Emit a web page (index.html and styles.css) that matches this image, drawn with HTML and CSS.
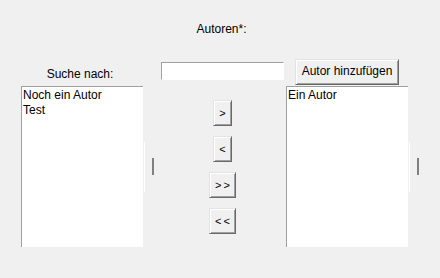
FILE: index.html
```html
<!DOCTYPE html>
<html lang="de">
<head>
<meta charset="utf-8">
<title>Autoren</title>
<link rel="stylesheet" href="styles.css">
</head>
<body>
<div class="frame">
  <div class="title">Autoren*:</div>
  <div class="grid">
    <div class="label">Suche nach:</div>
    <div></div>
    <div class="search-cell"><input class="search" type="text"></div>
    <div class="add-cell"><button class="btn add">Autor hinzufügen</button></div>
    <div></div>

    <div class="list">
      <div class="item">Noch ein Autor</div>
      <div class="item">Test</div>
    </div>
    <div class="sash"><span class="sash-line"></span><span class="sash-grip"></span></div>
    <div class="moves">
      <button class="btn move">&gt;</button>
      <button class="btn move">&lt;</button>
      <button class="btn move wide">&gt;&gt;</button>
      <button class="btn move wide">&lt;&lt;</button>
    </div>
    <div class="list">
      <div class="item">Ein Autor</div>
    </div>
    <div class="sash"><span class="sash-line"></span><span class="sash-grip"></span></div>
  </div>
</div>
</body>
</html>
```
FILE: styles.css
```css
html, body {
  margin: 0;
  padding: 0;
  background: #f0f0f0;
}

body {
  font-family: "Liberation Sans", Arial, sans-serif;
  font-size: 12px;
  line-height: 15px;
  color: #000;
}

.frame {
  width: 440px;
  height: 278px;
  padding-top: 22px;
  box-sizing: border-box;
}

.title {
  text-align: center;
  padding-left: 3px;
  margin-bottom: 22px;
}

.grid {
  display: grid;
  grid-template-columns: 122px 12px 131px 122px 12px;
  grid-template-rows: 27px 161px;
  padding-left: 21px;
}

.label {
  text-align: center;
  padding-right: 4px;
  padding-top: 3px;
  align-self: center;
}

.search-cell {
  padding-left: 6px;
  padding-top: 3px;
}

.search {
  display: block;
  width: 123px;
  height: 18px;
  box-sizing: border-box;
  margin: 0;
  padding: 0 2px;
  border: 1px solid;
  border-color: #a0a0a0 #ffffff #ffffff #a0a0a0;
  background: #fff;
  font: inherit;
  outline: none;
}

.add-cell {
  padding-left: 9px;
}

.btn {
  display: block;
  margin: 0;
  padding: 0;
  box-sizing: border-box;
  background: #f0f0f0;
  border: 1px solid;
  border-color: #e3e3e3 #696969 #696969 #e3e3e3;
  box-shadow: inset 1px 1px #ffffff, inset -1px -1px #a0a0a0;
  font-family: "Liberation Sans", Arial, sans-serif;
  font-size: 12px;
  line-height: 15px;
  color: #000;
}

.add {
  width: 104px;
  height: 26px;
  padding-bottom: 1px;
}

.list {
  background: #fff;
  border-top: 1px solid #a0a0a0;
  border-left: 1px solid #a0a0a0;
  padding-left: 1px;
  padding-top: 1px;
  box-sizing: border-box;
}

.item {
  white-space: nowrap;
}

.sash {
  display: flex;
  align-items: center;
}

.sash-line {
  width: 1px;
  height: 50px;
  background: #ffffff;
  margin-left: 1px;
}

.sash-grip {
  width: 2px;
  height: 17px;
  background: #808080;
  margin-left: 7px;
}

.moves {
  display: flex;
  flex-direction: column;
  align-items: center;
  gap: 10px;
  padding-top: 14px;
  padding-left: 4px;
}

.move {
  width: 19px;
  height: 26px;
  font-size: 11px;
}

.move.wide {
  width: 27px;
  letter-spacing: 2px;
  padding-left: 2px;
}
```
